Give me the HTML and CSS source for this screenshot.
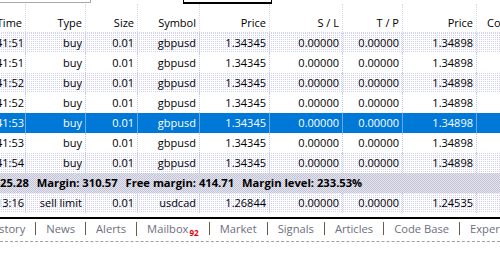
FILE: index.html
```html
<!DOCTYPE html>
<html>
<head>
<meta charset="utf-8">
<title>Terminal</title>
<link rel="stylesheet" href="styles.css">
</head>
<body>
<div class="toolbar">
	<div class="field"></div>
	<div class="button"></div>
</div>
<div class="grid">
	<div class="row head">
		<div>Time</div><div>Type</div><div>Size</div><div>Symbol</div><div>Price</div><div>S / L</div><div>T / P</div><div>Price</div><div class="cut">Commission</div>
	</div>
	<div class="row odd">
		<div>41:51</div><div>buy</div><div>0.01</div><div>gbpusd</div><div>1.34345</div><div>0.00000</div><div>0.00000</div><div>1.34898</div><div></div>
	</div>
	<div class="row">
		<div>41:51</div><div>buy</div><div>0.01</div><div>gbpusd</div><div>1.34345</div><div>0.00000</div><div>0.00000</div><div>1.34898</div><div></div>
	</div>
	<div class="row odd">
		<div>41:52</div><div>buy</div><div>0.01</div><div>gbpusd</div><div>1.34345</div><div>0.00000</div><div>0.00000</div><div>1.34898</div><div></div>
	</div>
	<div class="row">
		<div>41:52</div><div>buy</div><div>0.01</div><div>gbpusd</div><div>1.34345</div><div>0.00000</div><div>0.00000</div><div>1.34898</div><div></div>
	</div>
	<div class="row selected">
		<div>41:53</div><div>buy</div><div>0.01</div><div>gbpusd</div><div>1.34345</div><div>0.00000</div><div>0.00000</div><div>1.34898</div><div></div>
	</div>
	<div class="row">
		<div>41:53</div><div>buy</div><div>0.01</div><div>gbpusd</div><div>1.34345</div><div>0.00000</div><div>0.00000</div><div>1.34898</div><div></div>
	</div>
	<div class="row odd">
		<div>41:54</div><div>buy</div><div>0.01</div><div>gbpusd</div><div>1.34345</div><div>0.00000</div><div>0.00000</div><div>1.34898</div><div></div>
	</div>
	<div class="summary">
		<span>25.28</span><span>Margin: 310.57</span><span>Free margin: 414.71</span><span>Margin level: 233.53%</span>
	</div>
	<div class="row odd">
		<div>13:16</div><div>sell limit</div><div>0.01</div><div>usdcad</div><div>1.26844</div><div>0.00000</div><div>0.00000</div><div>1.24535</div><div></div>
	</div>
</div>
<div class="tabs">
	<span class="tab first">History</span>
	<span class="tab">News</span>
	<span class="tab">Alerts</span>
	<span class="tab">Mailbox<span class="count">92</span></span>
	<span class="tab">Market</span>
	<span class="tab">Signals</span>
	<span class="tab">Articles</span>
	<span class="tab">Code Base</span>
	<span class="tab">Experts</span>
</div>
</body>
</html>
```

FILE: styles.css
```css
* { box-sizing: border-box; }
html, body { margin: 0; padding: 0; background: #fff; }
body {
	width: 500px;
	height: 267px;
	overflow: hidden;
	font-family: "Open Sans", "Noto Sans", sans-serif;
	font-size: 11px;
	color: #000;
}

.toolbar {
	display: flex;
	height: 4px;
}
.field {
	width: 91px;
	height: 3px;
	border-right: 1px solid #a8a8a8;
	border-bottom: 1px solid #a8a8a8;
}
.button {
	width: 89px;
	height: 4px;
	margin-left: 92px;
	border: 1px solid #000;
	border-top: none;
	border-bottom-width: 2px;
}

.grid {
	margin-left: -4px;
	width: 520px;
}
.row {
	display: grid;
	grid-template-columns: 30px 60px 52px 62px 70px 73px 60px 74px 1fr;
	height: 20px;
	line-height: 20px;
}
.row > div {
	text-align: right;
	padding-right: 3px;
	white-space: nowrap;
	overflow: hidden;
	border-right: 1px dotted #c9c9ea;
}
.row > div:last-child { border-right: none; }
.row.head {
	height: 29px;
	line-height: 22px;
	border-bottom: 1px dotted #d4d4ef;
}
.row.head > div {
	padding-top: 8px;
	border-right-color: #d8d8f0;
}
.row.head .cut { text-align: left; padding-left: 10px; }

.odd {
	background-color: #fff;
	background-image: conic-gradient(#d2d2f0 0 25%, transparent 0);
	background-size: 2px 2px;
}
.selected {
	background: #0078d7;
	color: #fff;
}
.selected > div { border-right: 1px solid #6aa8e4; }

.summary {
	height: 20px;
	line-height: 20px;
	padding-left: 4px;
	font-weight: bold;
	font-size: 11.2px;
	white-space: nowrap;
	background-color: #e6e6ee;
	background-image: repeating-conic-gradient(#c2c2d6 0 25%, transparent 0 50%);
	background-size: 2px 2px;
}
.summary span { margin-right: 8px; }

.tabs {
	margin-top: 4px;
	border-top: 2px solid #000;
	border-bottom: 1px dashed #a0a0a0;
	height: 25px;
	padding-top: 3px;
	display: flex;
	align-items: flex-start;
	white-space: nowrap;
	color: #6e6e7e;
	font-size: 11.2px;
}
.tab {
	padding: 0 10px;
	border-left: 1px solid #6b5b4b;
	line-height: 13px;
}
.tab.first {
	border-left: none;
	padding-left: 0;
	margin-left: -12px;
}
.count {
	position: relative;
	top: 3px;
	color: #e00000;
	font-weight: bold;
	font-size: 8px;
	margin-left: 1px;
}
```
